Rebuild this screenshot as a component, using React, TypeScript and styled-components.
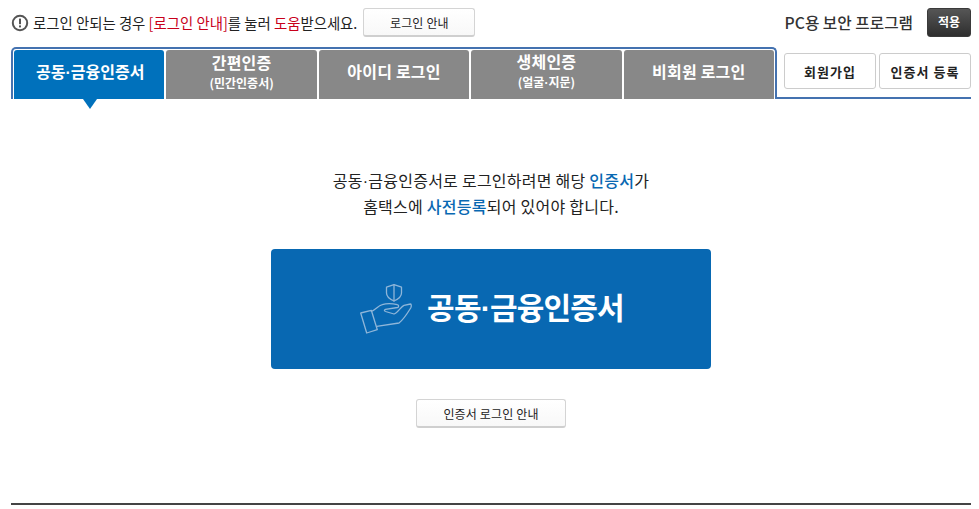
import styled, { createGlobalStyle } from 'styled-components';

const GlobalStyle = createGlobalStyle`
    html, body {
        margin: 0;
        background: #fff;
    }
    body {
        font-family: "Noto Sans CJK KR", "Noto Sans", sans-serif;
        color: #222;
    }
    * {
        box-sizing: border-box;
    }
`;

const Page = styled.div`
    width: 979px;
    height: 509px;
    padding: 8px 8px 0 11px;
    overflow: hidden;
`;

const TopBar = styled.div`
    height: 29px;
    display: flex;
    align-items: center;
    justify-content: space-between;
`;

const Notice = styled.div`
    display: flex;
    align-items: center;
    font-size: 14.4px;
    white-space: nowrap;
`;

const NoticeIcon = styled.svg`
    width: 18px;
    height: 18px;
    margin-right: 4px;
`;

const Red = styled.span`
    color: #c8001a;
`;

const GhostButton = styled.button<{ $width: number }>`
    width: ${(p) => p.$width}px;
    height: 29px;
    padding: 0;
    border: 1px solid #d4d4d4;
    border-bottom: 2px solid #cfcfcf;
    border-radius: 3px;
    background: linear-gradient(#fff, #f8f8f8);
    font-family: inherit;
    font-size: 12px;
    letter-spacing: 0.15px;
    color: #222;
`;

const NoticeButton = styled(GhostButton)`
    margin-left: 6px;
`;

const Security = styled.div`
    display: flex;
    align-items: center;
`;

const SecurityLabel = styled.span`
    font-size: 15.7px;
    font-weight: 500;
    color: #333;
    margin-right: 14px;
`;

const DarkButton = styled.button`
    width: 44px;
    height: 29px;
    padding: 0 0 2px;
    border: 1px solid #3a3a3a;
    border-radius: 3px;
    background: linear-gradient(#565656, #2e2e2e);
    color: #fff;
    font-family: inherit;
    font-size: 12px;
    font-weight: 700;
`;

const TabRow = styled.div`
    display: flex;
    margin-top: 10px;
    height: 52px;
`;

const TabFrame = styled.div`
    position: relative;
    width: 766px;
    height: 52px;
    padding: 1px 1px 0;
    display: grid;
    grid-template-columns: repeat(5, 1fr);
    gap: 2px;
    border: solid #4472b0;
    border-width: 2px 2px 0 2px;
    border-radius: 5px 5px 0 0;
`;

const Tab = styled.div<{ $active?: boolean }>`
    position: relative;
    height: 49px;
    padding: 0 0 6px ${(p) => (p.$active ? '2px' : '0')};
    display: flex;
    flex-direction: column;
    align-items: center;
    justify-content: center;
    border-radius: 3px 3px 0 0;
    background: ${(p) => (p.$active ? '#0071bc' : '#888')};
    color: #fff;
    font-size: 16px;
    font-weight: 700;
    line-height: 21px;
    letter-spacing: ${(p) => (p.$active ? '0' : '0.2px')};

    ${(p) =>
        p.$active &&
        `
        &::after {
            content: '';
            position: absolute;
            left: 69px;
            top: 100%;
            border-style: solid;
            border-width: 10px 7px 0 7px;
            border-color: #0071bc transparent transparent transparent;
        }
    `}
`;

const TabSub = styled.span`
    margin-top: 1px;
    font-size: 12px;
    line-height: 17px;
    letter-spacing: 0;
`;

const Dot = styled.span`
    font-family: "Liberation Sans", sans-serif;
`;

const SideLinks = styled.div`
    flex: 1;
    height: 52px;
    display: flex;
    gap: 3px;
    padding: 6px 0 0 7px;
    border-bottom: 2px solid #4472b0;
`;

const SideButton = styled.button`
    flex: 1;
    height: 36px;
    padding: 0;
    border: 1px solid #ccc;
    border-radius: 3px;
    background: #fff;
    font-family: inherit;
    font-size: 13px;
    font-weight: 700;
    letter-spacing: 1px;
    color: #222;
`;

const Main = styled.div`
    display: flex;
    flex-direction: column;
    align-items: center;
    padding-top: 69px;
`;

const Lead = styled.p`
    margin: 0;
    width: 440px;
    text-align: center;
    font-size: 16px;
    line-height: 25px;
    letter-spacing: 0.25px;
    color: #222;
`;

const Blue = styled.span`
    color: #0868b2;
    font-weight: 500;
`;

const CertButton = styled.button`
    width: 440px;
    height: 120px;
    margin-top: 30px;
    padding: 0 0 0 2px;
    display: flex;
    align-items: center;
    justify-content: center;
    gap: 15px;
    border: 0;
    border-radius: 4px;
    background: #0868b2;
    color: #fff;
    font-family: inherit;
    font-size: 30px;
    font-weight: 700;
    letter-spacing: -0.8px;
`;

const CertLabel = styled.span`
    margin-bottom: 6px;
`;

const CertButtonIcon = styled.svg`
    width: 52px;
    height: 50px;
    fill: none;
    stroke: #8fb6d9;
    stroke-width: 1.3;
    stroke-linejoin: round;
    stroke-linecap: round;
`;

const GuideButton = styled(GhostButton)`
    margin-top: 30px;
`;

const Footer = styled.hr`
    margin: 75px 0 0;
    height: 2px;
    border: 0;
    background: #444;
`;

export default function App() {
    return (
        <Page>
            <GlobalStyle />
            <TopBar>
                <Notice>
                    <NoticeIcon viewBox="0 0 18 18">
                        <circle cx="9" cy="9" r="7.2" fill="none" stroke="#555" strokeWidth="2" />
                        <rect x="8" y="4.6" width="2" height="5.6" fill="#555" />
                        <rect x="8" y="11.4" width="2" height="2" fill="#555" />
                    </NoticeIcon>
                    로그인 안되는 경우&nbsp;<Red>[로그인 안내]</Red>를 눌러&nbsp;<Red>도움</Red>받으세요.
                    <NoticeButton $width={112}>로그인 안내</NoticeButton>
                </Notice>
                <Security>
                    <SecurityLabel>PC용 보안 프로그램</SecurityLabel>
                    <DarkButton>적용</DarkButton>
                </Security>
            </TopBar>
            <TabRow>
                <TabFrame>
                    <Tab $active>
                        <span>
                            공동<Dot>·</Dot>금융인증서
                        </span>
                    </Tab>
                    <Tab>
                        간편인증
                        <TabSub>(민간인증서)</TabSub>
                    </Tab>
                    <Tab>아이디 로그인</Tab>
                    <Tab>
                        생체인증
                        <TabSub>
                            (얼굴<Dot>·</Dot>지문)
                        </TabSub>
                    </Tab>
                    <Tab>비회원 로그인</Tab>
                </TabFrame>
                <SideLinks>
                    <SideButton>회원가입</SideButton>
                    <SideButton>인증서 등록</SideButton>
                </SideLinks>
            </TabRow>
            <Main>
                <Lead>
                    공동<Dot>·</Dot>금융인증서로 로그인하려면 해당 <Blue>인증서</Blue>가
                    <br />
                    홈택스에 <Blue>사전등록</Blue>되어 있어야 합니다.
                </Lead>
                <CertButton>
                    <CertButtonIcon viewBox="0 0 52 50">
                        <path d="M34 0.7 L41.500 3.200 L41.500 9 C41.500 13 37.500 15.500 34 17 C30.500 15.500 26.500 13 26.500 9 L26.500 3.200 Z" />
                        <path d="M34 0.7 L34 17" />
                        <path d="M0.7 29 L11.300 26.300 L17.300 45.700 L6.700 49 Z" />
                        <path d="M11.300 27.300 C15 26.500 18 21.500 22.300 20.700 C26 19.500 33 19.700 37.300 20.700 C39 21 39 23.200 37.500 23.500 L25.500 25.300 C24 25.700 24 27 25.500 27.500 L34 30 C38 28.500 41 22.500 44 21.300 L50.500 20 C51.500 20 51.500 22.500 50.700 24 C47 30 43 36 39 39 L16.700 42.300" />
                    </CertButtonIcon>
                    <CertLabel>
                        공동<Dot>·</Dot>금융인증서
                    </CertLabel>
                </CertButton>
                <GuideButton $width={150}>인증서 로그인 안내</GuideButton>
            </Main>
            <Footer />
        </Page>
    );
}
